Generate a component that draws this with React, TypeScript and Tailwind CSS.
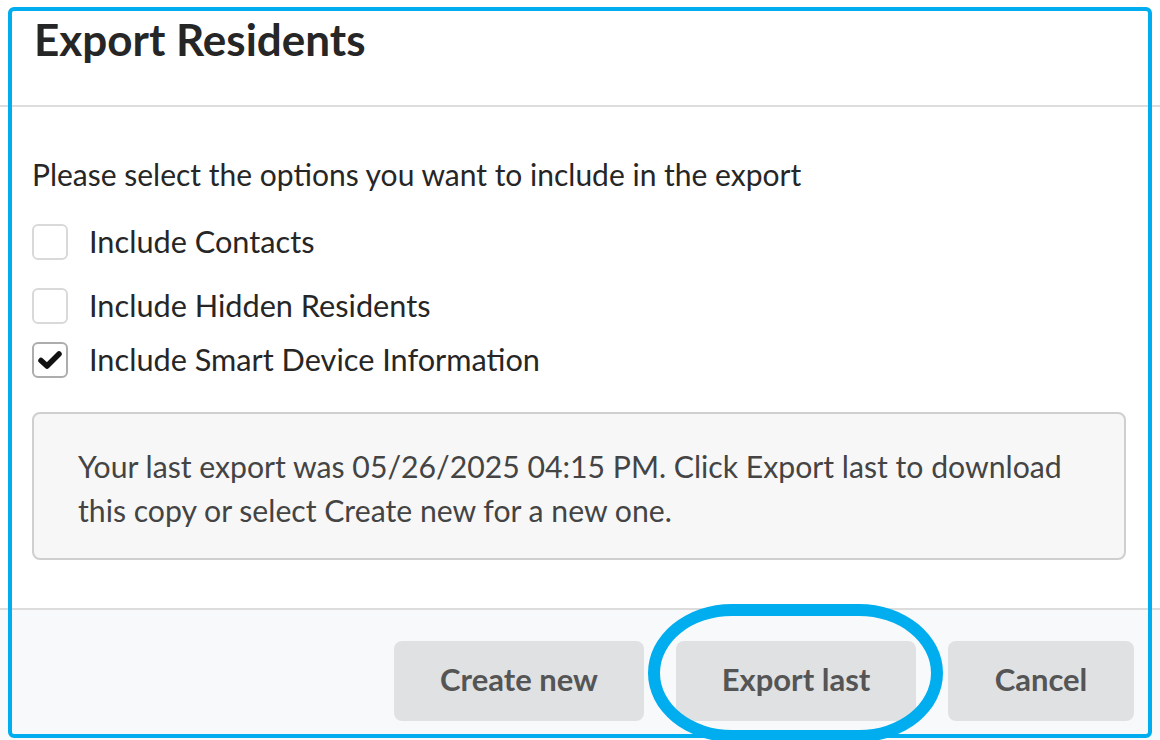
import React from "react";

function Checkbox({ checked }: { checked?: boolean }) {
  return (
    <span
      className={`flex h-[36px] w-[36px] flex-shrink-0 items-center justify-center rounded-[6px] border-2 bg-white ${
        checked ? "border-[#adadad]" : "border-[#d9d9d9]"
      }`}
    >
      {checked && (
        <svg width="26" height="22" viewBox="0 0 26 22">
          <path d="M4 11.5 L10 17 L22 5" fill="none" stroke="#111" strokeWidth="5.5" strokeLinecap="round" strokeLinejoin="round" />
        </svg>
      )}
    </span>
  );
}

const options = [
  { label: "Include Contacts", checked: false, mt: "mt-[32px]" },
  { label: "Include Hidden Residents", checked: false, mt: "mt-[28px]" },
  { label: "Include Smart Device Information", checked: true, mt: "mt-[18px]" },
];

export default function App() {
  return (
    <div className="relative h-[740px] w-[1160px] overflow-hidden bg-white font-['Lato','Open_Sans',sans-serif] text-[#262626]">
      {/* header */}
      <div className="h-[107px] border-b-2 border-[#dddddd] px-[34px] pt-[13px]">
        <h1 className="text-[44px] font-bold leading-[1.2] text-[#262626]">Export Residents</h1>
      </div>

      {/* body */}
      <div className="h-[501px] px-[32px] pt-[49px]">
        <p className="text-[30px] leading-[36px] text-[#262626]">Please select the options you want to include in the export</p>
        {options.map((o) => (
          <label key={o.label} className={`flex items-center gap-[21px] ${o.mt}`}>
            <Checkbox checked={o.checked} />
            <span className="text-[30.7px] leading-[36px]">{o.label}</span>
          </label>
        ))}
        <div className="mt-[34px] w-[1094px] rounded-[8px] border-2 border-[#cfcfcf] bg-[#f7f7f7] pb-[26px] pl-[44px] pr-[40px] pt-[30px] text-[30.2px] leading-[44px] text-[#444444]">
          Your last export was 05/26/2025 04:15 PM. Click Export last to download this copy or select Create new for a new one.
        </div>
      </div>

      {/* footer */}
      <div className="flex h-[132px] items-start justify-end gap-[32px] border-t-2 border-[#dcdcdc] bg-[#f8f9fa] pr-[26px] pt-[31px]">
        <button className="h-[80px] w-[250px] rounded-[8px] bg-[#e0e1e3] pb-[3px] text-[31px] font-bold text-[#555555]">Create new</button>
        <button className="h-[80px] w-[240px] rounded-[8px] bg-[#e0e1e3] pb-[3px] text-[31px] font-bold text-[#555555]">Export last</button>
        <button className="h-[80px] w-[186px] rounded-[8px] bg-[#e0e1e3] pb-[3px] text-[31px] font-bold text-[#555555]">Cancel</button>
      </div>

      {/* annotation overlays */}
      <div className="pointer-events-none absolute left-[8px] top-[7px] h-[731px] w-[1144px] rounded-[6px] border-4 border-[#00aeef]" />
      <div className="pointer-events-none absolute left-[648px] top-[604px] h-[138px] w-[295px] rounded-[84px/69px] border-[12px] border-[#00aeef]" />
    </div>
  );
}
